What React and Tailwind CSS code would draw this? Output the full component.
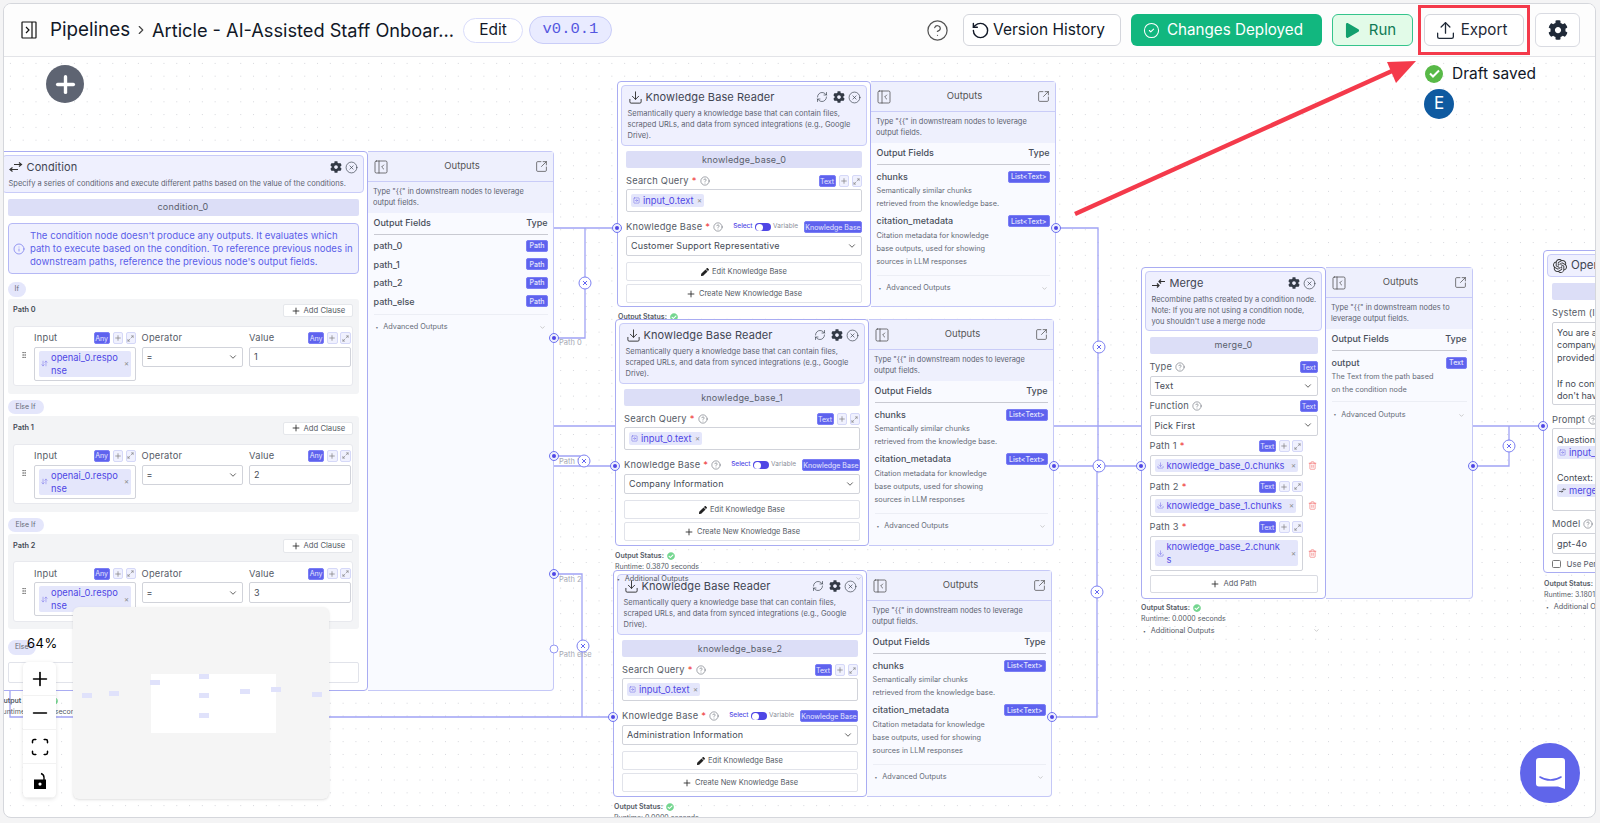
import {
  ChevronDown, ChevronRight, CircleCheck, CircleHelp, CircleX, Download, Info, Maximize2, Minus, PanelLeftClose,
  Plus, RefreshCw, RotateCcw, Scan, SquareArrowOutUpRight, SquareArrowRight, Trash2, Upload, ArrowDownUp, GripVertical,
} from 'lucide-react';
import { FaCog, FaPen, FaCheckCircle, FaPlay } from 'react-icons/fa';
import { SiOpenai } from 'react-icons/si';

const kbNote = ['Type "{{" in downstream nodes to leverage', 'output fields.'];
const kbFields = [
  { name: 'chunks', type: 'List<Text>', lines: ['Semantically similar chunks', 'retrieved from the knowledge base.'] },
  { name: 'citation_metadata', type: 'List<Text>', lines: ['Citation metadata for knowledge', 'base outputs, used for showing', 'sources in LLM responses'] },
];

function TypeChip({ children, className = '' }) {
  return (
    <span className={`flex h-[12px] items-center justify-center rounded-[2px] border border-[#7b7ef5] bg-[#5e62ee] px-[2px] text-[7px] leading-none whitespace-nowrap text-white/85 ${className}`}>
      {children}
    </span>
  );
}

function IconChips() {
  return (
    <>
      <span className="ml-[3px] flex h-[11.5px] w-[10.5px] items-center justify-center rounded-[2px] border border-[#d5d8f8] bg-[#f0f1fe] text-[#777]">
        <Plus size={8} />
      </span>
      <span className="ml-[2.5px] flex h-[11.5px] w-[10.5px] items-center justify-center rounded-[2px] border border-[#d5d8f8] bg-[#f0f1fe] text-[#777]">
        <Maximize2 size={7} />
      </span>
    </>
  );
}

function Label({ children, req, help }) {
  return (
    <span className="flex items-center text-[9.3px] leading-none tracking-[0.2px] text-[#555b66]">
      {children}
      {req && <span className="ml-[3px] text-[#ef4444]">*</span>}
      {help && <CircleHelp size={10} strokeWidth={1.3} className="ml-[3px]" />}
    </span>
  );
}

function VarChip({ icon, children, className = '' }) {
  return (
    <span className={`flex items-center rounded-[2px] bg-[#e4e6fb] px-[2px] text-[9.3px] text-[#4f46e5] ${className}`}>
      {icon}
      <span className="ml-[3px] leading-[13px] whitespace-nowrap">{children}</span>
      <span className="ml-auto pl-[3px] text-[6px] text-[#888]">✕</span>
    </span>
  );
}

function SelectBox({ value, className = '' }) {
  return (
    <div className={`flex h-[20.5px] items-center justify-between rounded-[2px] border border-[#d1d3da] bg-white px-[4px] text-[9px] tracking-[0.15px] text-[#444a55] ${className}`}>
      <span>{value}</span>
      <ChevronDown size={10} className="text-[#444]" />
    </div>
  );
}

function NodeHeader({ icon, title, sync, lines, className = '' }) {
  return (
    <div className={`rounded-[4px] border border-[#c9ccf8] bg-[#eff0fe] px-[5.5px] ${className}`}>
      <div className="flex h-[22px] items-center">
        <span className="w-[18px] text-[#333]">{icon}</span>
        <span className="text-[11px] tracking-[0.1px] text-[#3f4552]">{title}</span>
        <span className="ml-auto flex items-center gap-[3px] text-[#333a46]">
          {sync && <RefreshCw size={12} strokeWidth={1.3} className="mr-[2px]" />}
          <FaCog size={12} />
          <CircleX size={13} strokeWidth={1.2} />
        </span>
      </div>
      {lines.map((l) => (
        <div key={l} className="text-[7.5px] leading-[11px] whitespace-nowrap text-[#5c6270]">{l}</div>
      ))}
    </div>
  );
}

function NameBar({ children, className = '' }) {
  return (
    <div className={`flex h-[17px] items-center justify-center rounded-[2px] bg-[#dcdef7] text-[9px] tracking-[0.2px] text-[#5a5f6c] ${className}`}>
      {children}
    </div>
  );
}

function Outputs({ width, note, fields, compact, listClass = '' }) {
  return (
    <div className={`flex flex-col rounded-r-[4px] border border-l-0 border-[#c5c8f7] bg-[#f9faff] ${width}`}>
      <div className="flex h-[30px] items-center justify-between border-b border-[#c9ccf8] bg-[#eef0fd] px-[5px] text-[#444]">
        <PanelLeftClose size={16} strokeWidth={1.1} />
        <span className="text-[9.5px] text-[#555]">Outputs</span>
        <SquareArrowOutUpRight size={13} strokeWidth={1.3} />
      </div>
      <div className="flex h-[30.5px] flex-col justify-center bg-[#eef0fd] px-[5px] text-[7.4px] leading-[11px] text-[#5c6270]">
        {note.map((l) => <span key={l} className="whitespace-nowrap">{l}</span>)}
      </div>
      <div className="px-[5.5px]">
        <div className="flex h-[22px] items-center justify-between border-b-[1.5px] border-[#c9cad2] text-[9px] font-medium text-[#484e5a]">
          <span>Output Fields</span>
          <span>Type</span>
        </div>
        <div className={`border-b border-[#eceef5] ${compact ? 'pt-[2px] pb-[3px]' : 'pt-[6px]'} ${listClass}`}>
          {fields.map((f) => (
            <div key={f.name} className={f.lines ? 'mb-[5px]' : ''}>
              <div className={`flex items-center justify-between text-[9px] font-medium text-[#4a505c] ${compact ? 'h-[18.5px]' : 'h-[12px]'}`}>
                <span>{f.name}</span>
                <TypeChip>{f.type}</TypeChip>
              </div>
              {f.lines && (
                <div className="mt-[1.5px]">
                  {f.lines.map((l) => (
                    <div key={l} className="text-[7.3px] leading-[13px] whitespace-nowrap text-[#666b77]">{l}</div>
                  ))}
                </div>
              )}
            </div>
          ))}
        </div>
        <div className="flex h-[26px] items-center text-[7.3px] text-[#666b77]">
          <span className="mr-[5px] ml-[2px] text-[5px]">•</span>
          Advanced Outputs
          <ChevronDown size={7} className="mr-[2px] ml-auto text-[#aaa]" />
        </div>
      </div>
    </div>
  );
}

function KnowledgeNode({ className, name, base }) {
  return (
    <div className={`absolute flex ${className}`}>
      <div className="flex w-[254px] flex-col rounded-[4px] border border-[#a9acf2] bg-white p-[3px]">
        <NodeHeader
          icon={<Download size={15} strokeWidth={1.5} />}
          title="Knowledge Base Reader"
          sync
          className="h-[60.5px]"
          lines={['Semantically query a knowledge base that can contain files,', 'scraped URLs, and data from synced integrations (e.g., Google', 'Drive).']}
        />
        <div className="px-[5px]">
          <NameBar className="mt-[5.5px]">{name}</NameBar>
          <div className="mt-[7px] flex h-[12px] items-center">
            <Label req help>Search Query</Label>
            <TypeChip className="ml-auto w-[17px]">Text</TypeChip>
            <IconChips />
          </div>
          <div className="mt-[2px] flex h-[22.5px] items-center rounded-[2px] border border-[#d1d3da] bg-white px-[4px]">
            <VarChip icon={<SquareArrowRight size={7} strokeWidth={1.3} />} className="h-[13px]">input_0.text</VarChip>
          </div>
          <div className="mt-[9.5px] flex h-[12px] items-center">
            <Label req help>Knowledge Base</Label>
            <span className="ml-auto text-[6.5px] font-medium text-[#4f46e5]">Select</span>
            <span className="mx-[2px] flex h-[8.5px] w-[16.5px] items-center justify-start rounded-full bg-[#4f46e5] pl-[1px]">
              <span className="size-[7px] rounded-full bg-white" />
            </span>
            <span className="mr-[6px] text-[6.5px] text-[#8b8f9a]">Variable</span>
            <TypeChip className="w-[58px] text-[6.6px]">Knowledge Base</TypeChip>
          </div>
          <SelectBox value={base} className="mt-[2.5px]" />
          <button className="mt-[6px] flex h-[19px] w-full items-center justify-center gap-[3px] rounded-[2px] border border-[#e1e3ea] bg-white text-[7.5px] text-[#555b66]">
            <FaPen size={8} className="text-[#222]" /> Edit Knowledge Base
          </button>
          <button className="mt-[3px] flex h-[19px] w-full items-center justify-center gap-[3px] rounded-[2px] border border-[#e1e3ea] bg-white text-[7.5px] text-[#555b66]">
            <Plus size={10} className="text-[#222]" /> Create New Knowledge Base
          </button>
        </div>
      </div>
      <Outputs width="w-[185px]" note={kbNote} fields={kbFields} listClass="pb-[2px]" />
    </div>
  );
}

function Status({ className, runtime, extra }) {
  return (
    <div className={`absolute w-[250px] text-[7px] leading-[10.5px] text-[#555b66] ${className}`}>
      <div className="flex items-center font-semibold">
        Output Status:
        <FaCheckCircle size={8} className="ml-[3px] text-[#74d68f]" />
      </div>
      <div>Runtime: {runtime} seconds</div>
      {extra && (
        <div className={`mt-[1.5px] flex items-center text-[7.3px] ${extra}`}>
          <span className="mr-[5px] ml-[2px] text-[5px]">•</span>
          Additional Outputs
          <ChevronDown size={7} className="mr-[2px] ml-auto text-[#aaa]" />
        </div>
      )}
    </div>
  );
}

function Pill({ children, className = '' }) {
  return (
    <span className={`flex h-[14.5px] items-center justify-center rounded-full bg-[#e4e6fb] text-[7px] text-[#666b77] ${className}`}>
      {children}
    </span>
  );
}

function ClausePath({ label, value }) {
  return (
    <div className="rounded-[3px] bg-[#f3f4f6] px-[5.6px] pt-[5.3px] pb-[7.3px]">
      <div className="flex h-[13.7px] items-center justify-between">
        <span className="text-[7.3px] font-semibold text-[#444a55]">{label}</span>
        <button className="flex h-[13.7px] w-[70px] items-center justify-center gap-[3px] rounded-[2px] border border-[#e5e7eb] bg-white text-[7.7px] text-[#555b66]">
          <Plus size={10} className="text-[#222]" /> Add Clause
        </button>
      </div>
      <div className="mt-[8.3px] flex h-[60.7px] rounded-[3px] border border-[#e8e9ee] bg-white pt-[5.5px] pl-[6px]">
        <div className="flex w-[14px] shrink-0 items-start pt-[19px] text-[#666]">
          <GripVertical size={8} />
        </div>
        <div className="w-[102px]">
          <div className="flex h-[11.5px] items-center">
            <Label>Input</Label>
            <TypeChip className="ml-auto w-[16px]">Any</TypeChip>
            <IconChips />
          </div>
          <div className="mt-[3px] flex h-[34px] items-center rounded-[2px] border border-[#d1d3da] px-[4px]">
            <VarChip icon={<ArrowDownUp size={7} strokeWidth={1.3} />} className="h-[26px] w-full">openai_0.respo<br />nse</VarChip>
          </div>
        </div>
        <div className="ml-[5.5px] w-[101.5px]">
          <div className="flex h-[11.5px] items-center"><Label>Operator</Label></div>
          <SelectBox value="=" className="mt-[3px]" />
        </div>
        <div className="ml-[6px] w-[101.5px]">
          <div className="flex h-[11.5px] items-center">
            <Label>Value</Label>
            <TypeChip className="ml-auto w-[16px]">Any</TypeChip>
            <IconChips />
          </div>
          <div className="mt-[3px] flex h-[20.5px] items-center rounded-[2px] border border-[#d1d3da] px-[4px] text-[9px] text-[#444a55]">{value}</div>
        </div>
      </div>
    </div>
  );
}

function ConditionIcon() {
  return (
    <svg width="14" height="10" viewBox="0 0 14 10" fill="none" stroke="#333" strokeWidth="1.2">
      <path d="M5 2.5h7M10 .5l2.5 2-2.5 2" />
      <path d="M9 7.5H1.5M3.5 5.5L1 7.5l2.5 2" />
    </svg>
  );
}

function ConditionNode() {
  return (
    <div className="absolute top-[151px] left-[-2px] flex h-[540px]">
      <div className="flex w-[370px] flex-col rounded-[4px] border border-[#a9acf2] bg-white p-[3px]">
        <NodeHeader
          icon={<ConditionIcon />}
          title="Condition"
          className="h-[38px]"
          lines={['Specify a series of conditions and execute different paths based on the value of the conditions.']}
        />
        <div className="px-[5.5px]">
          <NameBar className="mt-[5.5px]">condition_0</NameBar>
          <div className="mt-[7.5px] flex h-[51px] items-center rounded-[4px] border-[1.5px] border-[#b5b8f5] bg-[#eff0fe] px-[4.5px] text-[9.6px] leading-[13px] text-[#5b5fe9]">
            <Info size={12} strokeWidth={1.2} className="mr-[5px] shrink-0" />
            <span className="flex-1">The condition node doesn't produce any outputs. It evaluates which path to execute based on the condition. To reference previous nodes in downstream paths, reference the previous node's output fields.</span>
          </div>
          <Pill className="mt-[8px] w-[18.5px]">If</Pill>
          <div className="mt-[2px]"><ClausePath label="Path 0" value="1" /></div>
          <Pill className="mt-[6px] w-[36px]">Else If</Pill>
          <div className="mt-[2px]"><ClausePath label="Path 1" value="2" /></div>
          <Pill className="mt-[6px] w-[36px]">Else If</Pill>
          <div className="mt-[2px]"><ClausePath label="Path 2" value="3" /></div>
          <Pill className="mt-[11px] w-[28.5px]">Else</Pill>
          <div className="mt-[7.5px] h-[20.5px] rounded-[2px] border border-[#e1e3ea]" />
        </div>
      </div>
      <Outputs
        width="w-[186px]"
        compact
        note={['Type "{{" in downstream nodes to leverage', 'output fields.']}
        fields={[
          { name: 'path_0', type: 'Path' }, { name: 'path_1', type: 'Path' },
          { name: 'path_2', type: 'Path' }, { name: 'path_else', type: 'Path' },
        ]}
      />
    </div>
  );
}

function MergeIcon({ width = 13 }) {
  return (
    <svg width={width} viewBox="0 0 13 9" fill="none" stroke="#333" strokeWidth="1.2">
      <path d="M0 6.5h7M5 4.5l2 2-2 2" />
      <path d="M13 2.5H7M9 .5l-2 2 2 2" />
    </svg>
  );
}

function MergePath({ label, chip, tall, chipWidth }) {
  return (
    <>
      <div className="mt-[4.5px] flex h-[12px] items-center pr-[15px]">
        <Label req>{label}</Label>
        <TypeChip className="ml-auto w-[17.5px]">Text</TypeChip>
        <IconChips />
      </div>
      <div className="mt-[2.5px] flex items-center">
        <div className={`flex w-[153px] items-center rounded-[2px] border border-[#d1d3da] px-[4px] ${tall ? 'h-[35px]' : 'h-[21.5px]'}`}>
          <VarChip icon={<Download size={7} strokeWidth={1.3} />} className={`${chipWidth} ${tall ? 'h-[26px]' : 'h-[13.5px]'}`}>{chip}</VarChip>
        </div>
        <Trash2 size={9} strokeWidth={1.3} className="ml-[5px] text-[#ef4444]" />
      </div>
    </>
  );
}

function MergeNode() {
  return (
    <div className="absolute top-[267px] left-[1141px] flex h-[331.5px]">
      <div className="flex w-[185px] flex-col rounded-[4px] border border-[#a9acf2] bg-white p-[3px]">
        <NodeHeader
          icon={<MergeIcon />}
          title="Merge"
          className="h-[60px]"
          lines={['Recombine paths created by a condition node.', 'Note: If you are not using a condition node,', "you shouldn't use a merge node"]}
        />
        <div className="px-[4.5px]">
          <NameBar className="mt-[5.5px]">merge_0</NameBar>
          <div className="mt-[7.5px] flex h-[12px] items-center"><Label help>Type</Label><TypeChip className="ml-auto w-[17.5px]">Text</TypeChip></div>
          <SelectBox value="Text" className="mt-[2.5px]" />
          <div className="mt-[4px] flex h-[12px] items-center"><Label help>Function</Label><TypeChip className="ml-auto w-[17.5px]">Text</TypeChip></div>
          <SelectBox value="Pick First" className="mt-[3px]" />
          <MergePath label="Path 1" chip="knowledge_base_0.chunks" chipWidth="w-[143px]" />
          <MergePath label="Path 2" chip="knowledge_base_1.chunks" chipWidth="w-[141px]" />
          <MergePath label="Path 3" chip={<>knowledge_base_2.chunk<br />s</>} chipWidth="w-[143px]" tall />
          <button className="mt-[4.5px] flex h-[17.5px] w-full items-center justify-center gap-[3px] rounded-[2px] border border-[#d9dbe2] bg-white text-[7.7px] text-[#555b66]">
            <Plus size={10} className="text-[#222]" /> Add Path
          </button>
        </div>
      </div>
      <Outputs
        width="w-[147px]"
        note={['Type "{{" in downstream nodes to', 'leverage output fields.']}
        fields={[{ name: 'output', type: 'Text', lines: ['The Text from the path based', 'on the condition node'] }]}
      />
    </div>
  );
}

function OpenAINode() {
  return (
    <div className="absolute top-[250px] left-[1543px] h-[323px] w-[254px] rounded-[4px] border border-[#a9acf2] bg-white p-[3px]">
      <div className="flex h-[23px] items-center rounded-[4px] border border-[#c9ccf8] bg-[#eff0fe] px-[5px] text-[11.5px] text-[#3f4552]">
        <SiOpenai size={14} className="mr-[4px] text-[#333]" />
        OpenAI
      </div>
      <div className="px-[5px]">
        <NameBar className="mt-[5.5px]" />
        <div className="mt-[8px] flex h-[11px] items-center"><Label>System (Instructions)</Label></div>
        <div className="mt-[3px] h-[83.5px] rounded-[2px] border border-[#d1d3da] px-[4px] pt-[4px] text-[9px] leading-[12.8px] whitespace-pre text-[#444a55]">
          {'You are a\ncompany\nprovided\n\nIf no context\ndon\'t have'}
        </div>
        <div className="mt-[9px] flex h-[11px] items-center"><Label help>Prompt</Label></div>
        <div className="mt-[3px] h-[82.5px] rounded-[2px] border border-[#d1d3da] px-[4px] pt-[4px] text-[9px] text-[#444a55]">
          <div className="leading-[13px]">Question:</div>
          <VarChip icon={<SquareArrowRight size={7} strokeWidth={1.3} />} className="h-[13px] w-[120px]">input_0.text</VarChip>
          <div className="mt-[12px] leading-[13px]">Context:</div>
          <VarChip icon={<MergeIcon width={7} />} className="h-[13px] w-[120px]">merge_0.output</VarChip>
        </div>
        <div className="mt-[8px] flex h-[11px] items-center"><Label help>Model</Label></div>
        <SelectBox value="gpt-4o" className="mt-[3.5px]" />
        <div className="mt-[4.5px] flex items-center text-[8px] text-[#555b66]">
          <span className="mr-[6px] size-[8.5px] rounded-[1.5px] border border-[#777]" />
          Use Personal API Key
        </div>
      </div>
    </div>
  );
}

function Handle({ className, open }) {
  if (open) {
    return <span className={`absolute size-[9px] -translate-x-1/2 -translate-y-1/2 rounded-full border border-[#9598f3] bg-white ${className}`} />;
  }
  return (
    <span className={`absolute flex size-[10px] -translate-x-1/2 -translate-y-1/2 items-center justify-center rounded-full border border-[#6e72f0] bg-[#eef0fd] ${className}`}>
      <span className="size-[4.5px] rounded-full bg-[#4f46e5]" />
    </span>
  );
}

function Edges() {
  const paths = [
    'M554 228H617', 'M554 338H585V228', 'M554 426H615', 'M554 456H580V466H615', 'M540 466H580',
    'M554 574H582V717', 'M10 690V717H613', 'M1056 228H1098V466', 'M1054 466H1141', 'M1052 717H1097V466',
    'M1054 426H1141', 'M1473 426H1543', 'M1473 466H1509V426',
  ];
  return (
    <svg className="absolute inset-0" width="1600" height="823" fill="none" stroke="#a0a3f5" strokeWidth="1.3">
      {paths.map((d) => <path key={d} d={d} />)}
    </svg>
  );
}

function Crosses() {
  const spots = [[585, 283], [584, 461], [583, 646], [1099, 347], [1099, 466], [1097, 592], [1509, 446]];
  return (
    <svg className="pointer-events-none absolute inset-0" width="1600" height="823" fill="none">
      {spots.map(([x, y]) => (
        <g key={x + '-' + y}>
          <circle cx={x} cy={y} r="6" fill="#fff" stroke="#7d81f2" strokeWidth="1" />
          <path d={`M${x - 2} ${y - 2}l4 4m0-4l-4 4`} stroke="#6366f1" strokeWidth="1" />
        </g>
      ))}
    </svg>
  );
}

function PathLabel({ className, children }) {
  return <span className={`absolute -translate-y-1/2 text-[7.5px] text-[#a5a8b3] ${className}`}>{children}</span>;
}

function MiniMap() {
  const spots = [
    'left-[9px] top-[86px]', 'left-[36px] top-[84px]', 'left-[77px] top-[73px]', 'left-[126px] top-[67px]',
    'left-[126px] top-[86px]', 'left-[126px] top-[106px]', 'left-[167px] top-[82px]', 'left-[198px] top-[80px]', 'left-[239px] top-[85px]',
  ];
  return (
    <div className="absolute top-[607px] left-[73px] h-[192px] w-[256px] rounded-[6px] bg-[#f5f5f5] shadow-sm">
      <div className="absolute top-[67px] left-[78px] h-[59px] w-[125px] bg-white" />
      {spots.map((s) => <span key={s} className={`absolute h-[5px] w-[9.5px] bg-[#e0e2fb] ${s}`} />)}
    </div>
  );
}

function ZoomControls() {
  const btn = 'flex h-[34px] items-center justify-center border-b border-[#f2f2f2] text-black';
  return (
    <>
      <span className="absolute top-[634px] left-[27px] text-[13px] tracking-[0.5px] text-black">64%</span>
      <div className="absolute top-[662px] left-[23px] w-[33px] overflow-hidden rounded-[5px] bg-white shadow-[0_1px_4px_rgba(0,0,0,0.12)]">
        <div className={btn}><Plus size={22} strokeWidth={1.8} /></div>
        <div className={btn}><Minus size={22} strokeWidth={1.8} /></div>
        <div className={btn}><Scan size={20} strokeWidth={1.8} /></div>
        <div className={btn}>
          <svg width="14" height="18" viewBox="0 0 14 18">
            <path d="M8 1.5c2 .6 3 2 3 4V8" fill="none" stroke="#000" strokeWidth="1.4" />
            <path fillRule="evenodd" d="M1 7.5h12V17H1zM7 10.5a1.6 1.6 0 1 0 0 3.2 1.6 1.6 0 0 0 0-3.2z" fill="#000" />
          </svg>
        </div>
      </div>
    </>
  );
}

function TopBar() {
  return (
    <header className="flex h-[53px] items-center border-b border-[#e3e4e8] bg-[#fdfdfd] pr-[15px] pl-[17px]">
      <svg width="16" height="18" viewBox="0 0 16 18" fill="none" stroke="#111" strokeWidth="1.2">
        <rect x="1" y="1" width="14" height="16" rx="0.5" />
        <path d="M11 1v16M5 6l3 3-3 3" />
      </svg>
      <span className="ml-[13px] text-[18.8px] leading-none text-[#111827]">Pipelines</span>
      <ChevronRight size={14} className="mx-[4px] text-[#444]" />
      <span className="text-[18.2px] leading-none whitespace-nowrap text-[#111827]">Article - AI-Assisted Staff Onboar...</span>
      <button className="ml-[9px] flex h-[25px] w-[60px] items-center justify-center rounded-full border border-[#d9dcfa] bg-white text-[15.5px] text-[#111827]">Edit</button>
      <span className="ml-[6px] flex h-[28px] w-[83px] items-center justify-center rounded-full border border-[#c9cdf8] bg-[#e9ebff] font-['Liberation_Mono',monospace] text-[15.5px] text-[#5457e0]">v0.0.1</span>
      <CircleHelp size={23} strokeWidth={1.3} className="ml-auto text-[#555]" />
      <button className="ml-[14px] flex h-[32px] w-[158px] items-center justify-center gap-[3px] rounded-[6px] border border-[#d4d6dc] bg-white pr-[8px] text-[15.5px] text-[#111827]">
        <RotateCcw size={19} strokeWidth={1.8} /> Version History
      </button>
      <button className="ml-[10px] flex h-[32px] w-[191px] items-center justify-center gap-[7px] rounded-[6px] bg-[#12b77f] pr-[7px] text-[15.2px] text-white">
        <CircleCheck size={17} strokeWidth={1.5} /> Changes Deployed
      </button>
      <button className="ml-[10px] flex h-[32px] w-[81px] items-center justify-center gap-[9px] rounded-[6px] border border-[#34c48c] bg-[#e2fbe8] pr-[4px] text-[15px] text-[#0f7a55]">
        <FaPlay size={15} className="text-[#12a06e]" /> Run
      </button>
      <div className="relative ml-[11px]">
        <button className="flex h-[32px] w-[100px] items-center justify-center gap-[5px] rounded-[6px] border border-[#d4d6dc] bg-white pr-[6px] text-[15.2px] text-[#1f2937]">
          <Upload size={21} strokeWidth={1.5} /> Export
        </button>
        <span className="absolute -inset-x-[6px] -inset-y-[9px] border-[3px] border-[#f43a4b]" />
      </div>
      <button className="ml-[11px] flex h-[34px] w-[45px] items-center justify-center rounded-[6px] border border-[#d9dbe2] bg-white text-[#1f2937]">
        <FaCog size={20} />
      </button>
    </header>
  );
}

export default function App() {
  return (
    <div className="h-[823px] w-[1600px] overflow-hidden bg-[#f4f4f5] pt-[3px] pl-[3px] font-['Inter',sans-serif]">
      <div className="flex h-[815px] w-[1593px] flex-col overflow-hidden rounded-[8px] border border-[#d5d7dc] bg-white">
        <TopBar />
        <main className="relative flex-1 overflow-hidden bg-[radial-gradient(#d6d7dc_0.7px,transparent_0.7px)] bg-[size:12.8px_12.8px]">
          <div className="absolute top-[-57px] left-[-4px] h-[823px] w-[1600px]">
            <Edges />
            <span className="absolute top-[65px] left-[46px] flex size-[38px] items-center justify-center rounded-full bg-[#5e6472] text-white">
              <Plus size={27} strokeWidth={3} />
            </span>

            <Status className="top-[312px] left-[618px]" runtime="0.0000" />
            <Status className="top-[696px] left-[-2px]" runtime="0.0000" />
            <ConditionNode />
            <KnowledgeNode className="top-[81px] left-[617px] h-[226px]" name="knowledge_base_0" base="Customer Support Representative" />
            <KnowledgeNode className="top-[319px] left-[615px] h-[227px]" name="knowledge_base_1" base="Company Information" />
            <KnowledgeNode className="top-[570px] left-[613px] h-[227px]" name="knowledge_base_2" base="Administration Information" />
            <Status className="top-[551px] left-[615px]" runtime="0.3870" extra="w-[249px]" />
            <Status className="top-[802px] left-[614px]" runtime="0.0000" />
            <MergeNode />
            <Status className="top-[603px] left-[1141px]" runtime="0.0000" extra="w-[181px]" />
            <OpenAINode />
            <Status className="top-[579px] left-[1544px]" runtime="3.1801" extra="w-[240px]" />

            <PathLabel className="top-[343px] left-[559px]">Path 0</PathLabel>
            <PathLabel className="top-[462px] left-[559px]">Path 1</PathLabel>
            <PathLabel className="top-[580px] left-[559px]">Path 2</PathLabel>
            <PathLabel className="top-[655px] left-[559px]">Path else</PathLabel>
            <Crosses />

            <Handle className="top-[338px] left-[554px]" />
            <Handle className="top-[456px] left-[554px]" />
            <Handle className="top-[574px] left-[554px]" />
            <Handle open className="top-[649px] left-[554px]" />
            <Handle className="top-[228px] left-[617px]" />
            <Handle className="top-[466px] left-[615px]" />
            <Handle className="top-[717px] left-[613px]" />
            <Handle className="top-[228px] left-[1056px]" />
            <Handle className="top-[466px] left-[1054px]" />
            <Handle className="top-[717px] left-[1052px]" />
            <Handle className="top-[466px] left-[1141px]" />
            <Handle className="top-[466px] left-[1473px]" />
            <Handle className="top-[426px] left-[1543px]" />

            <div className="absolute top-[62px] left-[1425px] flex items-center gap-[9px] text-[15.5px] text-[#111827]">
              <span className="flex size-[18px] items-center justify-center rounded-full bg-[#58b947]">
                <svg width="11" height="9" viewBox="0 0 11 9" fill="none" stroke="#fff" strokeWidth="2"><path d="M1 4.5l3 3 6-6" /></svg>
              </span>
              Draft saved
            </div>
            <span className="absolute top-[89px] left-[1424px] flex size-[30px] items-center justify-center rounded-full bg-[#0f5aa0] text-[17px] text-white">E</span>

            <svg className="pointer-events-none absolute inset-0" width="1600" height="823">
              <path d="M1075 214L1392 71" stroke="#f43a4b" strokeWidth="4.5" />
              <path d="M1416 61L1387 62L1396 83Z" fill="#f43a4b" />
            </svg>

            <MiniMap />
            <ZoomControls />

            <span className="absolute top-[743px] left-[1520px] flex size-[60px] items-center justify-center rounded-full bg-[#6065ea]">
              <svg width="29" height="32" viewBox="0 0 29 32">
                <path d="M3 1h23a3 3 0 0 1 3 3v28l-7-2.5H3a3 3 0 0 1-3-3V4a3 3 0 0 1 3-3z" fill="#fff" />
                <path d="M4 20c6 4 15 4 21 0" fill="none" stroke="#6065ea" strokeWidth="1.6" strokeLinecap="round" />
              </svg>
            </span>
          </div>
        </main>
      </div>
    </div>
  );
}
